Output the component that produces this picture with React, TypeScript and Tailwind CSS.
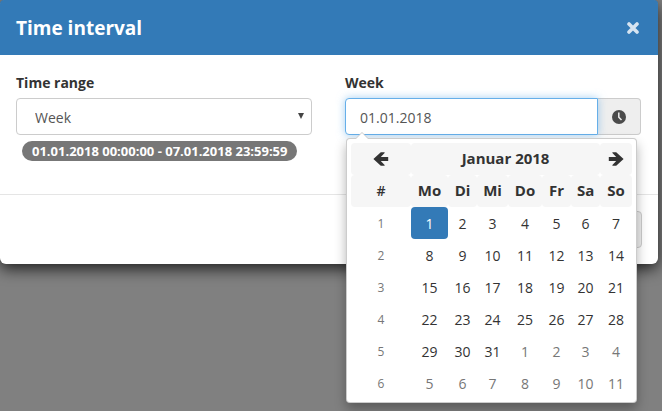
import { useState } from "react";

const weekdays = ["Mo", "Di", "Mi", "Do", "Fr", "Sa", "So"];

const weeks = [
    [1, 2, 3, 4, 5, 6, 7],
    [8, 9, 10, 11, 12, 13, 14],
    [15, 16, 17, 18, 19, 20, 21],
    [22, 23, 24, 25, 26, 27, 28],
    [29, 30, 31, 1, 2, 3, 4],
    [5, 6, 7, 8, 9, 10, 11],
];

function ArrowIcon({ className = "" }: { className?: string }) {
    return (
        <svg viewBox="0 0 16 14" className={`w-4 h-3.5 ${className}`} fill="currentColor" aria-hidden="true">
            <path d="M8.2 0.3L15.6 7L8.2 13.7H4.4V13L8.2 9.1H0.8V4.9H8.2L4.4 1V0.3Z" />
        </svg>
    );
}

function ClockIcon() {
    return (
        <svg viewBox="0 0 14 14" className="w-3.5 h-3.5" aria-hidden="true">
            <circle cx="7" cy="7" r="7" fill="#4b4b4b" />
            <path d="M6.8 2.6V7.2L9.5 10" fill="none" stroke="#eee" strokeWidth="1.5" />
        </svg>
    );
}

function CloseIcon() {
    return (
        <svg viewBox="0 0 12 12" className="w-3 h-3" aria-hidden="true">
            <path d="M2 2L10 10M10 2L2 10" stroke="currentColor" strokeWidth="3.6" strokeLinecap="round" />
        </svg>
    );
}

function Calendar() {
    const [selected, setSelected] = useState("0-0");

    return (
        <div className="absolute left-px top-full z-10 mt-[3px] w-[291px] rounded-sm border border-black/20 bg-white px-1 pt-1 pb-[3px] shadow-[0_6px_12px_rgba(0,0,0,0.3)]">
            {/* Pointer */}
            <svg viewBox="0 0 14 7" className="absolute -top-[7px] left-2 h-[7px] w-3.5" aria-hidden="true">
                <path d="M0 7L7 0L14 7Z" fill="#ccc" />
                <path d="M1 7L7 1L13 7Z" fill="#fff" />
            </svg>

            <table className="w-full table-fixed border-collapse text-center text-sm text-[#333]">
                <colgroup>
                    <col className="w-[60px]" />
                    <col className="w-[37px]" />
                    <col className="w-[29px]" />
                    <col className="w-[31px]" />
                    <col className="w-[34px]" />
                    <col className="w-[29px]" />
                    <col className="w-[29px]" />
                    <col />
                </colgroup>
                <thead className="text-[15px]">
                    <tr className="h-8">
                        <th className="rounded bg-[#f6f6f6] p-0">
                            <button type="button" aria-label="Previous month" className="block mx-auto">
                                <ArrowIcon className="rotate-180" />
                            </button>
                        </th>
                        <th colSpan={6} className="rounded bg-[#f6f6f6] p-0 font-bold">Januar 2018</th>
                        <th className="rounded bg-[#f6f6f6] p-0">
                            <button type="button" aria-label="Next month" className="block mx-auto">
                                <ArrowIcon />
                            </button>
                        </th>
                    </tr>
                    <tr className="h-8">
                        <th className="rounded bg-[#f6f6f6] p-0 text-sm font-semibold">#</th>
                        {weekdays.map((day) => (
                            <th key={day} className="rounded bg-[#f6f6f6] p-0 font-bold">{day}</th>
                        ))}
                    </tr>
                </thead>
                <tbody>
                    {weeks.map((days, week) => (
                        <tr key={week} className="h-8">
                            <td className="p-0 pt-0.5 text-xs text-[#777]">{week + 1}</td>
                            {days.map((day, i) => {
                                const id = `${week}-${i}`;
                                const outside = week * 7 + i >= 31;
                                const color = selected === id
                                    ? "bg-[#337ab7] text-white"
                                    : outside ? "text-[#777]" : "text-[#333]";
                                return (
                                    <td key={id} className="p-0">
                                        <button
                                            type="button"
                                            onClick={() => setSelected(id)}
                                            className={`block h-8 w-full rounded pt-0.5 ${color}`}
                                        >
                                            {day}
                                        </button>
                                    </td>
                                );
                            })}
                        </tr>
                    ))}
                </tbody>
            </table>
        </div>
    );
}

export default function App() {
    const [range, setRange] = useState("week");
    const [date, setDate] = useState("01.01.2018");

    return (
        <div className="min-h-screen bg-[#808080] pr-1 font-['Open_Sans','Noto_Sans',sans-serif] text-[#333]">
            <div className="rounded-md bg-white shadow-[0_5px_15px_rgba(0,0,0,0.75)]">

                {/* Header */}
                <div className="flex h-[55px] items-center justify-between rounded-t bg-[#337ab7] pl-4 pr-[19px] text-white">
                    <h4 className="text-[19px] leading-7 font-bold">Time interval</h4>
                    <button type="button" aria-label="Close" className="text-[#d6e4f1]">
                        <CloseIcon />
                    </button>
                </div>

                {/* Body */}
                <div className="grid grid-cols-2 gap-[33px] pl-4 pr-[17px] pt-[18px] pb-[33px]">
                    <div>
                        <label htmlFor="range" className="mb-[5px] block text-sm leading-5 font-bold">Time range</label>
                        <div className="relative">
                            <select
                                id="range"
                                value={range}
                                onChange={(e) => setRange(e.target.value)}
                                className="block h-[37px] w-full appearance-none rounded border border-[#ccc] bg-white px-[18px] pt-0.5 text-sm text-[#555]"
                            >
                                <option value="week">Week</option>
                            </select>
                            <svg viewBox="0 0 6 6" className="pointer-events-none absolute right-2 top-[15px] h-1.5 w-1.5" aria-hidden="true">
                                <path d="M0 0H6L3 6Z" fill="#444" />
                            </svg>
                        </div>
                        <span className="mt-1.5 ml-1.5 block h-5 w-fit rounded-full bg-[#777] px-2.5 text-[13px] leading-5 font-bold whitespace-nowrap text-white">
                            01.01.2018 00:00:00 - 07.01.2018 23:59:59
                        </span>
                    </div>

                    <div>
                        <label htmlFor="date" className="mb-[5px] block text-sm leading-5 font-bold">Week</label>
                        <div className="relative flex h-[37px]">
                            <input
                                id="date"
                                type="text"
                                value={date}
                                onChange={(e) => setDate(e.target.value)}
                                className="relative min-w-0 flex-1 rounded-l border border-[#66afe9] bg-white px-3.5 pt-0.5 text-sm text-[#555] shadow-[0_0_8px_rgba(102,175,233,0.6)] outline-none"
                            />
                            <button
                                type="button"
                                aria-label="Open calendar"
                                className="flex w-[43px] items-center justify-center rounded-r border border-l-0 border-[#ccc] bg-[#eee]"
                            >
                                <ClockIcon />
                            </button>
                            <Calendar />
                        </div>
                    </div>
                </div>

                {/* Footer */}
                <div className="flex justify-end border-t border-[#e5e5e5] px-4 py-4">
                    <button type="button" aria-label="Close dialog" className="h-[37px] w-16 rounded border border-[#ccc] bg-[#eee]" />
                </div>
            </div>
        </div>
    );
}
